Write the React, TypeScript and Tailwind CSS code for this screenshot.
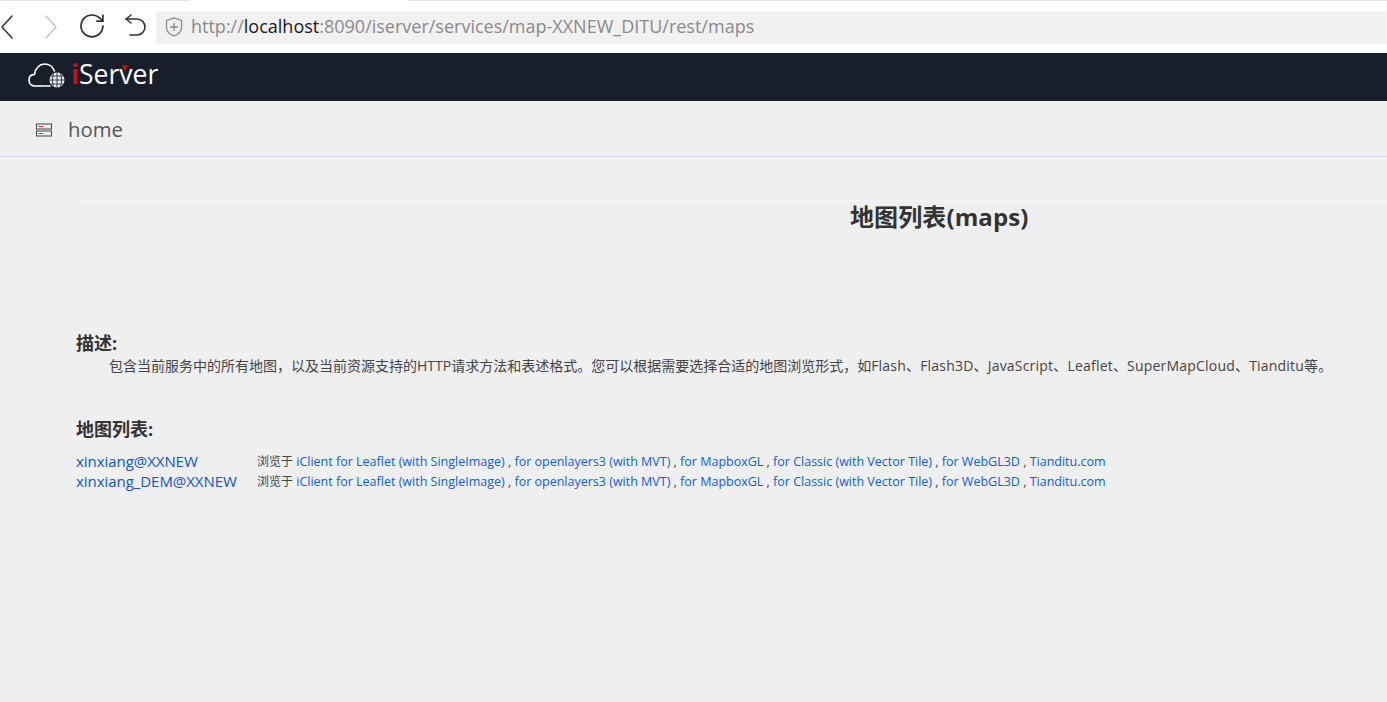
import React from 'react';

const font = "font-['Open_Sans','Noto_Sans_CJK_SC',sans-serif]";

const viewers = [
  'iClient for Leaflet (with SingleImage)',
  'for openlayers3 (with MVT)',
  'for MapboxGL',
  'for Classic (with Vector Tile)',
  'for WebGL3D',
  'Tianditu.com',
];

const maps = ['xinxiang@XXNEW', 'xinxiang_DEM@XXNEW'];

function BrowserBar() {
  return (
    <div className="relative flex h-[53px] items-center bg-white pt-[1px]">
      {/* tab strip remnants along the top edge */}
      <div className="absolute left-0 top-0 h-[1px] w-[190px] bg-[#e4e4e4]" />
      <div className="absolute left-[408px] top-0 h-[1px] w-[979px] bg-[#e4e4e4]" />
      <svg width="156" height="40" viewBox="0 0 156 40" fill="none" className="shrink-0" strokeLinecap="round" strokeLinejoin="round">
        <path d="M12 9 L2 20 L12 31" stroke="#333" strokeWidth="1.5" />
        <path d="M46 9 L56 20 L46 31" stroke="#c4c4c4" strokeWidth="1.5" />
        <g transform="translate(77.3 4.3) scale(1.22)" stroke="#333" strokeWidth="1.35">
          <path d="M21 12a9 9 0 1 1-9-9c2.52 0 4.93 1 6.74 2.74L21 8" />
          <path d="M21 3v5h-5" />
        </g>
        <path d="M131 8 L126 12 L131 16" stroke="#333" strokeWidth="1.6" />
        <path d="M126 12 H137 A8 8 0 0 1 137 28 H130" stroke="#333" strokeWidth="1.6" />
      </svg>
      <div className="flex h-[33px] flex-1 items-center border border-[#f7f7f7] bg-[#f1f1f1] pl-[8px]">
        <svg width="18" height="20" viewBox="0 0 18 20" fill="none" stroke="#888" strokeWidth="1.3">
          <path d="M1.5 3.5 L9 1 L16.5 3.5 V10.5 C16.5 14.5 13 17.5 9 19 C5 17.5 1.5 14.5 1.5 10.5 Z" />
          <path d="M9 6 V14 M5 10 H13" />
        </svg>
        <div className={`mb-[2px] ml-[8px] text-[18px] text-[#8a8a8a] ${font}`}>
          http://<span className="text-[#1a1a1a]">localhost</span>:8090/iserver/services/map-XXNEW_DITU/rest/maps
        </div>
      </div>
    </div>
  );
}

function Logo() {
  return (
    <div className="flex h-[48px] items-center bg-[#181f2b] pb-[5px] pl-[28px]">
      <svg width="38" height="26" viewBox="0 0 38 26" fill="none">
        <path d="M12 24 H7 C3.5 24 1 21.5 1 18 C1 14.8 3.2 12.6 6.5 12.4 C7 6.5 11.5 2 16.5 2 C21.5 2 25 5 26.5 9" stroke="#fff" strokeWidth="1.6" strokeLinecap="round" />
        <path d="M12 24 H22" stroke="#fff" strokeWidth="1.6" strokeLinecap="round" />
        <circle cx="29" cy="18" r="7.5" fill="#e8e8e8" />
        <path d="M21.5 18 H36.5 M23 14 H35 M23 22 H35 M29 10.5 V25.5 M25.5 11.5 C24 16 24 20 25.5 24.5 M32.5 11.5 C34 16 34 20 32.5 24.5" stroke="#181f2b" strokeWidth="0.8" />
      </svg>
      <div className={`relative ml-[5px] text-[26.5px] leading-none text-white ${font}`}>
        <span className="font-bold text-[#c4101a]">i</span>Server
        <span className="absolute left-[51px] top-[4px] h-0 w-0 border-x-[3px] border-t-[7px] border-x-transparent border-t-[#c4101a]" />
      </div>
    </div>
  );
}

function HomeBar() {
  return (
    <div className="flex h-[56px] items-center border-b border-[#cfdcf3] pl-[36px] pt-[2px]">
      <svg width="16" height="14" viewBox="0 0 16 14" fill="none" className="mt-[1px]">
        <rect x="0.5" y="1" width="15" height="5" stroke="#444" />
        <rect x="0.5" y="8" width="15" height="5" stroke="#444" />
        <path d="M2.5 3.5 H7 M2.5 10.5 H7" stroke="#d33" />
      </svg>
      <span className={`ml-[16px] text-[20.3px] text-[#555] ${font}`}>home</span>
    </div>
  );
}

function ViewerRow({ name }: { name: string }) {
  return (
    <div className="flex h-[20px] items-center">
      <a className="mt-[2px] w-[181px] shrink-0 text-[15px] tracking-[-0.05px] text-[#1155cc]">{name}</a>
      <div className="mt-[5px] text-[12.5px] whitespace-nowrap text-[#444]">
        <span className="text-[12px]">浏览于</span>{' '}
        {viewers.map((v, i) => (
          <span key={v}>
            <a className="text-[#0f5ce0]">{v}</a>
            {i < viewers.length - 1 ? ' , ' : ''}
          </span>
        ))}
      </div>
    </div>
  );
}

export default function App() {
  return (
    <div className={`h-[702px] w-[1387px] overflow-hidden bg-[#efefef] ${font}`}>
      <BrowserBar />
      <Logo />
      <HomeBar />
      <div className="pl-[76px]">
        <div className="mt-[43px] ml-[4px] border-t-2 border-[#f3f3f5] pl-[770px]">
          <h1 className="text-[24px] leading-[30px] tracking-[0.1px] font-bold text-[#333]">地图列表(maps)</h1>
        </div>
        <h2 className="mt-[99px] text-[18px] leading-[24px] font-bold text-[#333]">描述:</h2>
        <p className="pl-[33px] text-[14px] leading-[22px] whitespace-nowrap text-[#444]">
          包含当前服务中的所有地图，以及当前资源支持的HTTP请求方法和表述格式。您可以根据需要选择合适的地图浏览形式，如
          <span className="tracking-[0.2px]">Flash、Flash3D、JavaScript、Leaflet、SuperMapCloud、Tianditu等。</span>
        </p>
        <h2 className="mt-[40px] mb-[9px] text-[18px] leading-[24px] font-bold text-[#333]">地图列表:</h2>
        {maps.map((m) => (
          <ViewerRow key={m} name={m} />
        ))}
      </div>
    </div>
  );
}
